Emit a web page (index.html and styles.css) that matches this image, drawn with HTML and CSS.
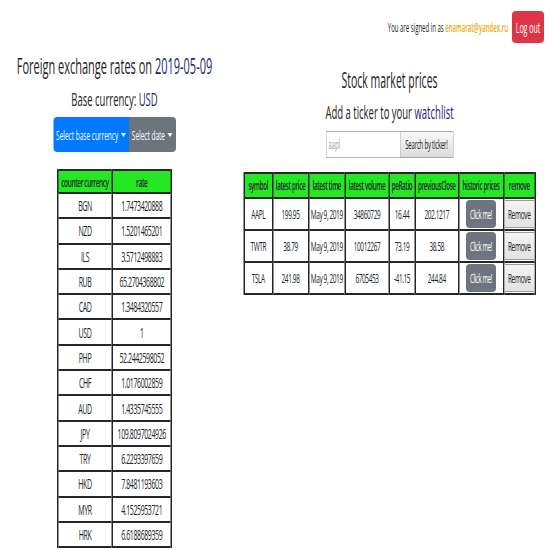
FILE: index.html
```html
<!DOCTYPE html>
<html lang="en">
<head>
<meta charset="utf-8">
<title>Exchange rates and stocks</title>
<link rel="stylesheet" href="styles.css">
</head>
<body>
<div class="page">
  <header class="topbar">
    <span class="signed">You are signed in as <span class="email">enamarat@yandex.ru</span></span>
    <button class="btn btn-danger">Log out</button>
  </header>
  <main class="row">
    <section class="col-left">
      <h3 class="title">Foreign exchange rates on <span class="accent">2019-05-09</span></h3>
      <h4 class="subtitle">Base currency: <span class="accent">USD</span></h4>
      <div class="btn-group">
        <button class="btn btn-primary btn-first">Select base currency <span class="caret"></span></button>
        <button class="btn btn-secondary btn-last">Select date <span class="caret"></span></button>
      </div>
      <table class="grid rates">
        <thead>
          <tr><th class="c-cur">counter currency</th><th class="c-rate">rate</th></tr>
        </thead>
        <tbody>
          <tr><td>BGN</td><td>1.7473420888</td></tr>
          <tr><td>NZD</td><td>1.5201465201</td></tr>
          <tr><td>ILS</td><td>3.5712498883</td></tr>
          <tr><td>RUB</td><td>65.2704368802</td></tr>
          <tr><td>CAD</td><td>1.3484320557</td></tr>
          <tr><td>USD</td><td>1</td></tr>
          <tr><td>PHP</td><td>52.2442598052</td></tr>
          <tr><td>CHF</td><td>1.0176002859</td></tr>
          <tr><td>AUD</td><td>1.4335745555</td></tr>
          <tr><td>JPY</td><td>109.8097024926</td></tr>
          <tr><td>TRY</td><td>6.2293397659</td></tr>
          <tr><td>HKD</td><td>7.8481193603</td></tr>
          <tr><td>MYR</td><td>4.1525953721</td></tr>
          <tr><td>HRK</td><td>6.6188689359</td></tr>
        </tbody>
      </table>
    </section>
    <section class="col-right">
      <h3 class="title2">Stock market prices</h3>
      <h4 class="subtitle2">Add a ticker to your <span class="accent">watchlist</span></h4>
      <form class="search">
        <input class="search-input" type="text" placeholder="aapl">
        <button type="button" class="search-btn">Search by ticker!</button>
      </form>
      <table class="grid stocks">
        <thead>
          <tr>
            <th class="s-sym">symbol</th>
            <th class="s-price">latest price</th>
            <th class="s-time">latest time</th>
            <th class="s-vol">latest volume</th>
            <th class="s-pe">peRatio</th>
            <th class="s-prev">previousClose</th>
            <th class="s-hist">historic prices</th>
            <th class="s-rem">remove</th>
          </tr>
        </thead>
        <tbody>
          <tr><td>AAPL</td><td>199.95</td><td>May 9, 2019</td><td>34860729</td><td>16.44</td><td>202.1217</td><td><button class="btn btn-secondary btn-click">Click me!</button></td><td><button class="btn-remove">Remove</button></td></tr>
          <tr><td>TWTR</td><td>38.79</td><td>May 9, 2019</td><td>10012267</td><td>73.19</td><td>38.58</td><td><button class="btn btn-secondary btn-click">Click me!</button></td><td><button class="btn-remove">Remove</button></td></tr>
          <tr><td>TSLA</td><td>241.98</td><td>May 9, 2019</td><td>6705453</td><td>-41.15</td><td>244.84</td><td><button class="btn btn-secondary btn-click">Click me!</button></td><td><button class="btn-remove">Remove</button></td></tr>
        </tbody>
      </table>
    </section>
  </main>
</div>
</body>
</html>
```

FILE: styles.css
```css
html, body {
  margin: 0;
  padding: 0;
  height: 550px;
  overflow: hidden;
  background: #fff;
}

/* The page is drawn at double width, then squeezed horizontally like the reference capture */
.page {
  width: 1100px;
  transform: scaleX(0.5);
  transform-origin: 0 0;
  font-family: "Open Sans", "Noto Sans", sans-serif;
  color: #212529;
}

.topbar {
  display: flex;
  justify-content: flex-end;
  align-items: center;
  gap: 8px;
  padding: 11px 12px 0 0;
}

.signed {
  font-size: 12px;
  color: #212529;
}

.email {
  color: #e8ad14;
  font-weight: 600;
}

.btn {
  border: none;
  color: #fff;
  font-family: inherit;
  cursor: pointer;
  border-radius: 8px / 4px;
}

.btn-danger {
  background: #dc3545;
  width: 64px;
  height: 32px;
  font-size: 14px;
  padding: 0;
}

.row {
  display: flex;
}

.col-left {
  width: 458px;
  text-align: center;
}

.col-right {
  flex: 1;
  text-align: center;
}

.title {
  font-size: 22px;
  line-height: 26px;
  font-weight: 400;
  margin: 9px 0 0;
  color: #1e2226;
}

.accent {
  color: #1f1f7a;
}

.subtitle {
  font-size: 19px;
  line-height: 22px;
  font-weight: 400;
  margin: 10px 0 0;
  color: #1e2226;
}

.btn-group {
  display: inline-flex;
  margin-top: 7px;
}

.btn-primary {
  background: #007bff;
}

.btn-secondary {
  background: #6c757d;
}

.btn-first {
  width: 151px;
  height: 35px;
  font-size: 13px;
  padding: 0;
  border-radius: 8px 0 0 8px / 4px 0 0 4px;
}

.btn-last {
  width: 94px;
  height: 35px;
  font-size: 13px;
  padding: 0;
  border-radius: 0 8px 8px 0 / 0 4px 4px 0;
}

.caret {
  display: inline-block;
  vertical-align: 3px;
  margin-left: 2px;
  border-top: 4px solid #fff;
  border-left: 5px solid transparent;
  border-right: 5px solid transparent;
}

.grid {
  border-collapse: collapse;
  table-layout: fixed;
  margin-left: auto;
  margin-right: auto;
  font-size: 14px;
  letter-spacing: -0.8px;
}

.grid th,
.grid td {
  box-sizing: border-box;
  border-style: solid;
  border-color: #262626;
  border-width: 2px 3px;
  padding: 0 1px;
  text-align: center;
  white-space: nowrap;
}

.grid th {
  background: #25e825;
  font-weight: 600;
}

.rates {
  margin-top: 17px;
  width: 227px;
}

.rates th {
  height: 23px;
  font-size: 13px;
}

.rates td {
  height: 25.3px;
}

.c-cur { width: 109px; }
.c-rate { width: 118px; }

.title2 {
  font-size: 21px;
  line-height: 25px;
  font-weight: 400;
  margin: 25px 0 0;
  color: #1e2226;
}

.subtitle2 {
  font-size: 19px;
  line-height: 23px;
  font-weight: 400;
  margin: 8px 0 0;
  color: #1e2226;
}

.search {
  display: inline-flex;
  margin: 7px 0 0;
}

.search-input {
  box-sizing: border-box;
  width: 148px;
  height: 27px;
  border: 1px solid #b5b5b5;
  border-right: none;
  padding: 0 4px;
  font-family: inherit;
  font-size: 12px;
}

.search-input::placeholder {
  color: #9a9a9a;
}

.search-btn {
  box-sizing: border-box;
  width: 107px;
  height: 27px;
  border: 1px solid #a8a8a8;
  background: linear-gradient(#f8f8f8, #dcdcdc);
  font-family: inherit;
  font-size: 12px;
  letter-spacing: -0.4px;
  color: #222;
  padding: 0;
}

.stocks {
  margin-top: 14px;
  width: 582px;
  font-size: 13px;
}

.stocks th {
  height: 25px;
  font-size: 12.5px;
  letter-spacing: -0.7px;
}

.stocks td {
  height: 32px;
}

.s-sym { width: 57px; }
.s-price { width: 72px; }
.s-time { width: 73px; }
.s-vol { width: 88px; }
.s-pe { width: 52px; }
.s-prev { width: 87px; }
.s-hist { width: 90px; }
.s-rem { width: 63px; }

.stocks td:last-child {
  padding: 0;
}

.btn-click {
  width: 60px;
  height: 28px;
  font-size: 12px;
  letter-spacing: -0.6px;
  padding: 0;
  vertical-align: middle;
}

.btn-remove {
  width: 60px;
  height: 28px;
  padding: 0;
  font-family: inherit;
  font-size: 13px;
  letter-spacing: -0.6px;
  color: #222;
  background: linear-gradient(#f4f4f4, #e2e2e2);
  border: 1px solid #9d9d9d;
  vertical-align: middle;
}
```
